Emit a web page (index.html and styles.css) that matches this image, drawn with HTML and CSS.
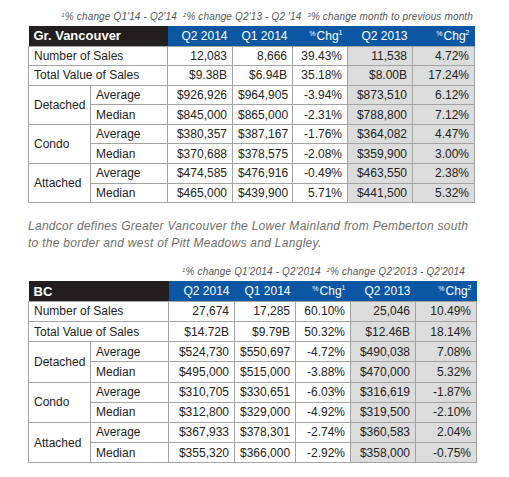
FILE: index.html
```html
<!DOCTYPE html>
<html lang="en">
<head>
    <meta charset="UTF-8">
    <meta name="viewport" content="width=device-width, initial-scale=1.0">
    <title>Sales Statistics Q2 2014</title>
    <link rel="stylesheet" href="styles.css">
</head>
<body>
    <div class="page">
        <section class="block block-van">
            <p class="notes"><sup>1</sup>% change Q1'14 - Q2'14 &nbsp;<sup>2</sup>% change Q2'13 - Q2 '14 &nbsp;<sup>3</sup>% change month to previous month</p>
            <table class="stats">
                <colgroup>
                    <col style="width: 62px">
                    <col style="width: 77px">
                    <col style="width: 65px">
                    <col style="width: 60px">
                    <col style="width: 55px">
                    <col style="width: 65px">
                    <col style="width: 62px">
                </colgroup>
                <thead>
                    <tr>
                        <th colspan="2" class="title">Gr. Vancouver</th>
                        <th>Q2 2014</th>
                        <th>Q1 2014</th>
                        <th><span class="pct">%</span>Chg<sup>1</sup></th>
                        <th>Q2 2013</th>
                        <th><span class="pct">%</span>Chg<sup>2</sup></th>
                    </tr>
                </thead>
                <tbody>
                    <tr>
                        <td colspan="2" class="label">Number of Sales</td>
                        <td>12,083</td><td>8,666</td><td>39.43%</td>
                        <td class="shade">11,538</td><td class="shade">4.72%</td>
                    </tr>
                    <tr>
                        <td colspan="2" class="label">Total Value of Sales</td>
                        <td>$9.38B</td><td>$6.94B</td><td>35.18%</td>
                        <td class="shade">$8.00B</td><td class="shade">17.24%</td>
                    </tr>
                    <tr>
                        <td rowspan="2" class="label">Detached</td>
                        <td class="label">Average</td>
                        <td>$926,926</td><td>$964,905</td><td>-3.94%</td>
                        <td class="shade">$873,510</td><td class="shade">6.12%</td>
                    </tr>
                    <tr>
                        <td class="label">Median</td>
                        <td>$845,000</td><td>$865,000</td><td>-2.31%</td>
                        <td class="shade">$788,800</td><td class="shade">7.12%</td>
                    </tr>
                    <tr>
                        <td rowspan="2" class="label">Condo</td>
                        <td class="label">Average</td>
                        <td>$380,357</td><td>$387,167</td><td>-1.76%</td>
                        <td class="shade">$364,082</td><td class="shade">4.47%</td>
                    </tr>
                    <tr>
                        <td class="label">Median</td>
                        <td>$370,688</td><td>$378,575</td><td>-2.08%</td>
                        <td class="shade">$359,900</td><td class="shade">3.00%</td>
                    </tr>
                    <tr>
                        <td rowspan="2" class="label">Attached</td>
                        <td class="label">Average</td>
                        <td>$474,585</td><td>$476,916</td><td>-0.49%</td>
                        <td class="shade">$463,550</td><td class="shade">2.38%</td>
                    </tr>
                    <tr>
                        <td class="label">Median</td>
                        <td>$465,000</td><td>$439,900</td><td>5.71%</td>
                        <td class="shade">$441,500</td><td class="shade">5.32%</td>
                    </tr>
                </tbody>
            </table>
        </section>

        <p class="remark">Landcor defines Greater Vancouver the Lower Mainland from Pemberton south to the border and west of Pitt Meadows and Langley.</p>

        <section class="block block-bc">
            <p class="notes"><sup>1</sup>% change Q1'2014 - Q2'2014 &nbsp;<sup>2</sup>% change Q2'2013 - Q2'2014</p>
            <table class="stats">
                <colgroup>
                    <col style="width: 62px">
                    <col style="width: 78px">
                    <col style="width: 66px">
                    <col style="width: 61px">
                    <col style="width: 55px">
                    <col style="width: 65px">
                    <col style="width: 61px">
                </colgroup>
                <thead>
                    <tr>
                        <th colspan="2" class="title">BC</th>
                        <th>Q2 2014</th>
                        <th>Q1 2014</th>
                        <th><span class="pct">%</span>Chg<sup>1</sup></th>
                        <th>Q2 2013</th>
                        <th><span class="pct">%</span>Chg<sup>2</sup></th>
                    </tr>
                </thead>
                <tbody>
                    <tr>
                        <td colspan="2" class="label">Number of Sales</td>
                        <td>27,674</td><td>17,285</td><td>60.10%</td>
                        <td class="shade">25,046</td><td class="shade">10.49%</td>
                    </tr>
                    <tr>
                        <td colspan="2" class="label">Total Value of Sales</td>
                        <td>$14.72B</td><td>$9.79B</td><td>50.32%</td>
                        <td class="shade">$12.46B</td><td class="shade">18.14%</td>
                    </tr>
                    <tr>
                        <td rowspan="2" class="label">Detached</td>
                        <td class="label">Average</td>
                        <td>$524,730</td><td>$550,697</td><td>-4.72%</td>
                        <td class="shade">$490,038</td><td class="shade">7.08%</td>
                    </tr>
                    <tr>
                        <td class="label">Median</td>
                        <td>$495,000</td><td>$515,000</td><td>-3.88%</td>
                        <td class="shade">$470,000</td><td class="shade">5.32%</td>
                    </tr>
                    <tr>
                        <td rowspan="2" class="label">Condo</td>
                        <td class="label">Average</td>
                        <td>$310,705</td><td>$330,651</td><td>-6.03%</td>
                        <td class="shade">$316,619</td><td class="shade">-1.87%</td>
                    </tr>
                    <tr>
                        <td class="label">Median</td>
                        <td>$312,800</td><td>$329,000</td><td>-4.92%</td>
                        <td class="shade">$319,500</td><td class="shade">-2.10%</td>
                    </tr>
                    <tr>
                        <td rowspan="2" class="label">Attached</td>
                        <td class="label">Average</td>
                        <td>$367,933</td><td>$378,301</td><td>-2.74%</td>
                        <td class="shade">$360,583</td><td class="shade">2.04%</td>
                    </tr>
                    <tr>
                        <td class="label">Median</td>
                        <td>$355,320</td><td>$366,000</td><td>-2.92%</td>
                        <td class="shade">$358,000</td><td class="shade">-0.75%</td>
                    </tr>
                </tbody>
            </table>
        </section>
    </div>
</body>
</html>
```

FILE: styles.css
```css
* {
    box-sizing: border-box;
    margin: 0;
    padding: 0;
}

body {
    font-family: "Liberation Sans", Arial, sans-serif;
    background: #fff;
    color: #222;
}

.page {
    padding: 9px 0 0 28px;
}

.block-van {
    width: 446px;
}

.block-bc {
    width: 448px;
    margin-top: 12px;
}

.notes {
    text-align: right;
    font-size: 10px;
    line-height: 12px;
    font-style: italic;
    color: #555;
    letter-spacing: 0.15px;
    margin-bottom: 3px;
    padding-right: 1px;
}

.block-bc .notes {
    padding-right: 11px;
}

.notes sup {
    font-size: 6px;
    vertical-align: 3px;
}

.stats {
    width: 100%;
    table-layout: fixed;
    border-collapse: collapse;
    font-size: 12px;
}

.stats th {
    height: 20px;
    background: #0b57a3;
    color: #fff;
    font-weight: normal;
    text-align: right;
    padding: 0 5px;
    white-space: nowrap;
}

.stats th.title {
    background: #231f20;
    text-align: left;
    font-weight: bold;
    font-size: 13px;
}

.stats th sup {
    font-size: 7px;
    vertical-align: 5px;
}

.pct {
    font-size: 7px;
    vertical-align: 4px;
    margin-right: 1px;
}

.stats td {
    height: 19.6px;
    border: 1px solid #a3a3a3;
    text-align: right;
    padding: 0 5px;
    white-space: nowrap;
}

.block-bc .stats td {
    height: 20.2px;
}

.stats td.label {
    text-align: left;
}

.stats td.shade {
    background: #dcdcdc;
}

.remark {
    margin-top: 15px;
    width: 450px;
    font-size: 12px;
    line-height: 17px;
    font-style: italic;
    color: #6e6e6e;
    letter-spacing: 0.28px;
}
```
